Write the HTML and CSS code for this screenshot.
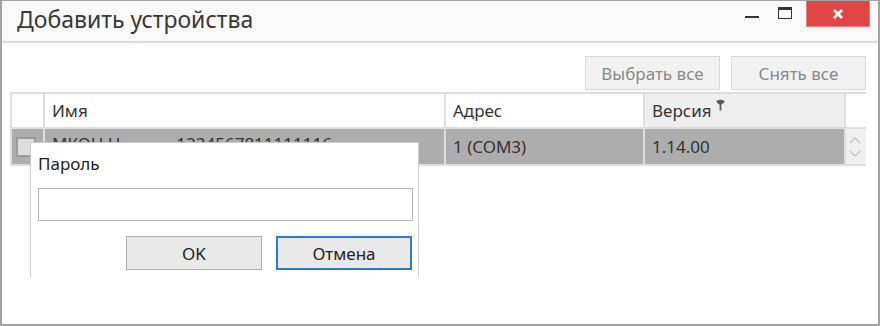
FILE: index.html
```html
<!DOCTYPE html>
<html lang="ru">
<head>
    <meta charset="UTF-8">
    <title>Добавить устройства</title>
    <link rel="stylesheet" href="styles.css">
</head>
<body>
    <div class="window">
        <div class="titlebar">
            <span class="title">Добавить устройства</span>
            <span class="win-btn minimize"><span class="min-line"></span></span>
            <span class="win-btn maximize">
                <svg width="14" height="12" viewBox="0 0 14 12"><rect x="0.5" y="0.5" width="13" height="11" fill="#fff" stroke="#333"/><rect x="0" y="0" width="14" height="3" fill="#333"/></svg>
            </span>
            <span class="win-btn close">
                <svg width="12" height="12" viewBox="0 0 12 12"><path d="M2 2 L10 10 M10 2 L2 10" stroke="#fff" stroke-width="2.6"/></svg>
            </span>
        </div>

        <div class="content">
            <div class="toolbar">
                <button class="tool-btn">Выбрать все</button>
                <button class="tool-btn">Снять все</button>
            </div>

            <div class="grid">
                <div class="cell head"></div>
                <div class="cell head">Имя</div>
                <div class="cell head">Адрес</div>
                <div class="cell head sorted">Версия
                    <svg class="filter" width="9" height="12" viewBox="0 0 9 12"><path d="M0.3 2 Q4.5 -0.6 8.7 2 Q8.4 4.4 5.4 5.6 V11.5 H3.6 V5.6 Q0.6 4.4 0.3 2 Z" fill="#5a5a5a"/></svg>
                </div>
                <div class="cell head scroll-head"></div>

                <div class="cell row"><span class="check"></span></div>
                <div class="cell row name"><span>МКОН Н</span><span class="serial">1234567811111116</span></div>
                <div class="cell row">1 (COM3)</div>
                <div class="cell row">1.14.00</div>
                <div class="cell scroll">
                    <svg width="12" height="24" viewBox="0 0 12 24"><path d="M1 8 L6 3 L11 8 M1 16 L6 21 L11 16" fill="none" stroke="#c4c4c4" stroke-width="1.3"/></svg>
                </div>
            </div>
        </div>

        <div class="popup">
            <div class="popup-label">Пароль</div>
            <input class="popup-input" type="password">
            <div class="popup-actions">
                <button class="popup-btn">OK</button>
                <button class="popup-btn default">Отмена</button>
            </div>
        </div>
    </div>
</body>
</html>
```

FILE: styles.css
```css
body {
    margin: 0;
    background: #ffffff;
    font-family: "Noto Sans", "Open Sans", sans-serif;
    color: #333;
}

.window {
    position: relative;
    width: 880px;
    height: 326px;
    box-sizing: border-box;
    border: 2px solid #a3a3a3;
    border-top-width: 1px;
    background: #ffffff;
}

.titlebar {
    display: flex;
    align-items: flex-start;
    height: 40px;
    background: #f9f9f9;
    border-bottom: 2px solid #dcdcdc;
}

.title {
    flex: 1;
    padding: 2px 0 0 15px;
    font-size: 23px;
    color: #383838;
}

.win-btn {
    display: flex;
    justify-content: center;
    align-items: center;
}

.minimize {
    width: 40px;
    height: 30px;
}

.min-line {
    width: 14px;
    height: 2px;
    background: #333;
    margin-top: 2px;
}

.maximize {
    width: 26px;
    height: 24px;
}

.close {
    width: 64px;
    height: 26px;
    margin: 0 8px 0 8px;
    background: #e04545;
    border: 1px solid #ee7d7d;
    border-top: none;
    box-sizing: border-box;
}

.content {
    padding: 13px 12px 0 8px;
}

.toolbar {
    display: flex;
    justify-content: flex-end;
    gap: 11px;
    margin-bottom: 2px;
}

.tool-btn {
    width: 135px;
    height: 34px;
    background: #f2f2f2;
    border: 1px solid #dadada;
    color: #8a8a8a;
    font-family: inherit;
    font-size: 17px;
}

.grid {
    display: grid;
    grid-template-columns: 33px 401px 199px 201px 20px;
    grid-template-rows: 33px 35px;
    width: 856px;
    box-sizing: border-box;
    border: 2px solid #dedede;
    background: #dedede;
    row-gap: 2px;
}

.cell {
    display: flex;
    align-items: center;
    padding-left: 7px;
    font-size: 17px;
    border-right: 2px solid #dedede;
    box-sizing: border-box;
}

.head {
    background: #ffffff;
    color: #333;
}

.head.sorted {
    background: #efefef;
}

.filter {
    margin: -12px 0 0 4px;
}

.scroll-head {
    border-right: none;
}

.row {
    background: #adadad;
    color: #333;
}

.row.name {
    align-items: flex-start;
    padding-top: 3px;
}

.serial {
    margin-left: 56px;
}

.check {
    width: 20px;
    height: 20px;
    background: #dedede;
    border: 2px solid #9a9a9a;
    box-sizing: border-box;
    margin-left: -3px;
}

.scroll {
    background: #f0f0f0;
    border-right: none;
    padding-left: 3px;
}

.popup {
    position: absolute;
    left: 28px;
    top: 141px;
    width: 389px;
    height: 135px;
    box-sizing: border-box;
    background: #ffffff;
    border: 1px solid #cccccc;
    border-bottom: none;
    padding: 9px 6px 0 7px;
}

.popup-label {
    font-size: 17px;
    color: #222;
    height: 26px;
}

.popup-input {
    display: block;
    width: 375px;
    height: 33px;
    box-sizing: border-box;
    margin-top: 10px;
    border: 1px solid #b4b4b4;
}

.popup-actions {
    display: flex;
    justify-content: flex-end;
    gap: 14px;
    margin-top: 15px;
}

.popup-btn {
    width: 136px;
    height: 34px;
    background: #e9e9e9;
    border: 1px solid #adadad;
    color: #222;
    font-family: inherit;
    font-size: 17px;
}

.popup-btn.default {
    border: 2px solid #2a7bd0;
}
```
